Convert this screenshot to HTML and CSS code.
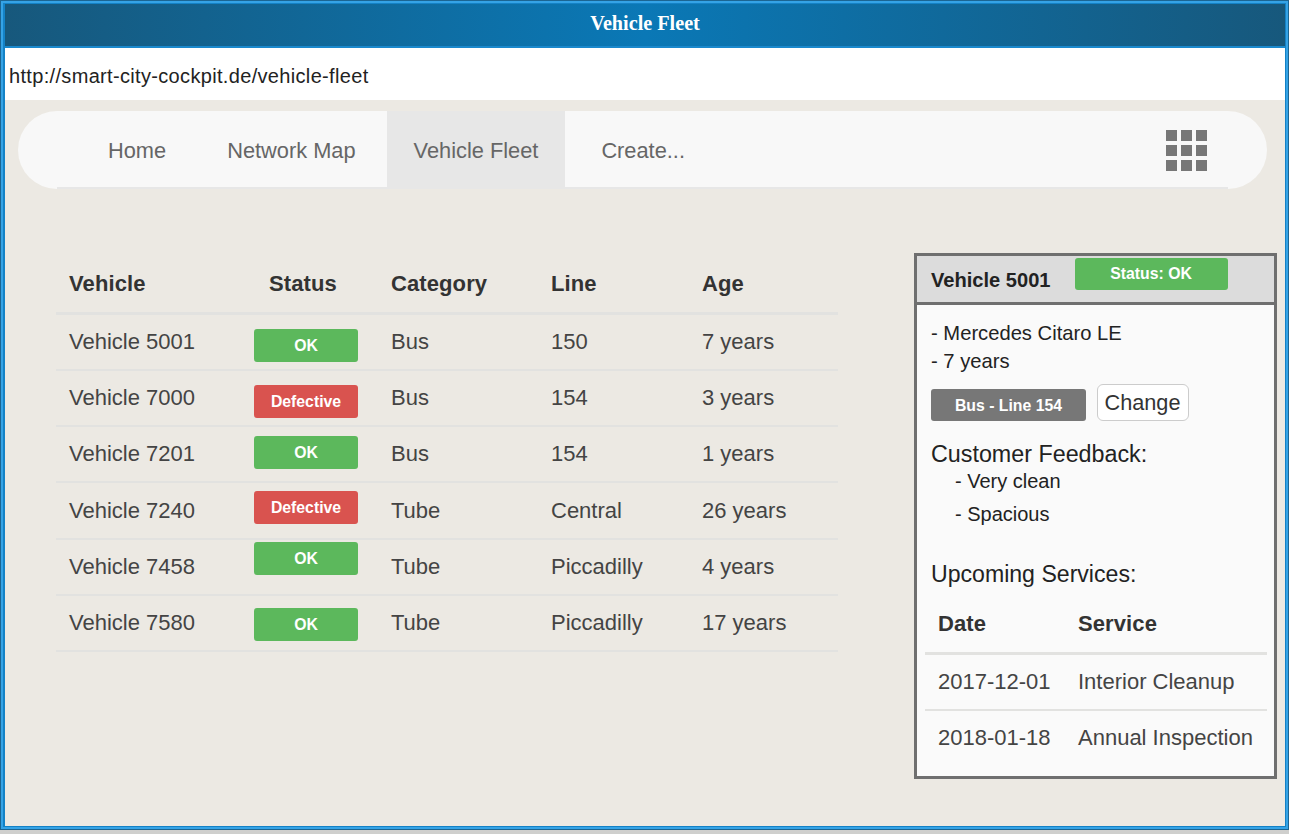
FILE: index.html
```html
<!DOCTYPE html>
<html lang="en">
<head>
  <meta charset="UTF-8">
  <meta name="viewport" content="width=device-width, initial-scale=1.0">
  <title>Vehicle Fleet</title>
  <link rel="stylesheet" href="styles.css">
</head>
<body>
  <div class="window">
    <div class="title-bar">Vehicle Fleet</div>
    <div class="url-bar">http://smart-city-cockpit.de/vehicle-fleet</div>
    <div class="content">
      <nav class="navbar">
        <div class="nav-inner">
          <a class="nav-home" href="#">Home</a>
          <a class="nav-map" href="#">Network Map</a>
          <a class="nav-fleet active" href="#">Vehicle Fleet</a>
          <a class="nav-create" href="#">Create...</a>
          <svg class="grid-icon" width="41" height="41" viewBox="0 0 41 41">
            <rect x="0" y="0" width="11" height="11"/>
            <rect x="15" y="0" width="11" height="11"/>
            <rect x="30" y="0" width="11" height="11"/>
            <rect x="0" y="15" width="11" height="11"/>
            <rect x="15" y="15" width="11" height="11"/>
            <rect x="30" y="15" width="11" height="11"/>
            <rect x="0" y="30" width="11" height="11"/>
            <rect x="15" y="30" width="11" height="11"/>
            <rect x="30" y="30" width="11" height="11"/>
          </svg>
        </div>
      </nav>

      <div class="main">
        <table class="fleet-table">
          <thead>
            <tr>
              <th class="col-vehicle">Vehicle</th>
              <th class="col-status">Status</th>
              <th class="col-category">Category</th>
              <th class="col-line">Line</th>
              <th>Age</th>
            </tr>
          </thead>
          <tbody>
            <tr>
              <td>Vehicle 5001</td>
              <td class="status-cell"><span class="badge ok drop-14">OK</span></td>
              <td>Bus</td><td>150</td><td>7 years</td>
            </tr>
            <tr>
              <td>Vehicle 7000</td>
              <td class="status-cell"><span class="badge defective drop-14">Defective</span></td>
              <td>Bus</td><td>154</td><td>3 years</td>
            </tr>
            <tr>
              <td>Vehicle 7201</td>
              <td class="status-cell"><span class="badge ok drop-9">OK</span></td>
              <td>Bus</td><td>154</td><td>1 years</td>
            </tr>
            <tr>
              <td>Vehicle 7240</td>
              <td class="status-cell"><span class="badge defective drop-8">Defective</span></td>
              <td>Tube</td><td>Central</td><td>26 years</td>
            </tr>
            <tr>
              <td>Vehicle 7458</td>
              <td class="status-cell"><span class="badge ok drop-2">OK</span></td>
              <td>Tube</td><td>Piccadilly</td><td>4 years</td>
            </tr>
            <tr>
              <td>Vehicle 7580</td>
              <td class="status-cell"><span class="badge ok drop-12">OK</span></td>
              <td>Tube</td><td>Piccadilly</td><td>17 years</td>
            </tr>
          </tbody>
        </table>

        <aside class="panel">
          <div class="panel-head">
            <span class="panel-title">Vehicle 5001</span>
            <span class="badge ok panel-status">Status: OK</span>
          </div>
          <div class="panel-body">
            <p class="spec">- Mercedes Citaro LE</p>
            <p class="spec">- 7 years</p>
            <div class="assign">
              <span class="badge line-badge">Bus - Line 154</span>
              <button class="change-btn">Change</button>
            </div>
            <h3 class="feedback-title">Customer Feedback:</h3>
            <p class="feedback">- Very clean</p>
            <p class="feedback">- Spacious</p>
            <h3 class="services-title">Upcoming Services:</h3>
            <table class="service-table">
              <thead>
                <tr><th class="col-date">Date</th><th>Service</th></tr>
              </thead>
              <tbody>
                <tr><td>2017-12-01</td><td>Interior Cleanup</td></tr>
                <tr><td>2018-01-18</td><td>Annual Inspection</td></tr>
              </tbody>
            </table>
          </div>
        </aside>
      </div>
    </div>
  </div>
</body>
</html>
```

FILE: styles.css
```css
html, body {
  margin: 0;
  height: 100%;
  overflow: hidden;
}
body {
  background-color: #cfcfcd;
  font-family: "Liberation Sans", Arial, sans-serif;
  color: #333;
}
.window {
  box-sizing: border-box;
  width: 1283px;
  height: 824px;
  margin: 3px;
  display: flex;
  flex-direction: column;
  border: 1px solid #1482c6;
  border-left-width: 2px;
  box-shadow: 0 0 0 2px #35a3e6, 0 0 0 3px #1c6592;
}
.title-bar {
  height: 44px;
  box-sizing: border-box;
  border-bottom: 2px solid #1a88cc;
  background: linear-gradient(to right, #17587c, #0a78b6 50%, #17587c);
  color: #fff;
  font-family: "Liberation Serif", "Times New Roman", serif;
  font-weight: bold;
  font-size: 20.2px;
  line-height: 39px;
  text-align: center;
}
.url-bar {
  height: 52px;
  background-color: #fff;
  color: #222;
  font-size: 20px;
  letter-spacing: 0.33px;
  line-height: 56px;
  padding-left: 4px;
}
.content {
  flex: 1;
  background-color: #ece9e3;
  padding-top: 11px;
}

/* nav */
.navbar {
  margin: 0 18px 0 13px;
  height: 78px;
  background-color: #f8f8f8;
  border-radius: 39px;
  padding: 0 39px;
}
.nav-inner {
  box-sizing: border-box;
  height: 78px;
  display: flex;
  align-items: stretch;
  border-bottom: 2px solid #e7e7e7;
}
.nav-inner a {
  color: #666;
  text-decoration: none;
  font-size: 21.8px;
  line-height: 80px;
  padding: 0 27px;
}
.nav-home { margin-left: 24px; }
.nav-map { margin-left: 7px; }
.nav-fleet { margin-left: 4px; }
.nav-create { margin-left: 9px; }
.nav-inner a.active {
  background-color: #e7e7e7;
  color: #666;
}
.grid-icon {
  margin: 19px 21px 0 auto;
  fill: #777;
}

/* main area */
.main {
  display: flex;
  align-items: flex-start;
  padding: 64px 8px 0 51px;
}
table {
  border-collapse: collapse;
  font-size: 22px;
}
th {
  text-align: left;
  padding: 0 0 0 13px;
  border-bottom: 3px solid #e2e2e0;
  color: #333;
  letter-spacing: 0.1px;
}
td {
  padding: 0 0 0 13px;
  border-bottom: 2px solid #e2e2e0;
  color: #444;
}
.fleet-table {
  width: 782px;
  margin-top: 3px;
  table-layout: fixed;
}
.fleet-table th { height: 56px; }
.fleet-table td { height: 54px; }
.fleet-table tbody tr:nth-child(4) td { height: 55px; }
.col-vehicle { width: 172px; }
.col-status { width: 109px; padding-left: 28px; }
.col-category { width: 147px; }
.col-line { width: 138px; }
.status-cell {
  vertical-align: top;
}
.badge {
  display: block;
  box-sizing: border-box;
  width: 104px;
  height: 33px;
  border-radius: 3px;
  color: #fff;
  font-size: 15.8px;
  font-weight: bold;
  line-height: 33px;
  text-align: center;
}
.ok { background-color: #5cb85c; }
.defective { background-color: #d9534f; }
.drop-2 { margin-top: 2px; }
.drop-8 { margin-top: 8px; }
.drop-9 { margin-top: 9px; }
.drop-12 { margin-top: 12px; }
.drop-14 { margin-top: 14px; }

/* detail panel */
.panel {
  box-sizing: border-box;
  width: 363px;
  height: 526px;
  margin-left: auto;
  border: 3px solid #6f6f6f;
  background-color: #fafafa;
  color: #222;
}
.panel-head {
  box-sizing: border-box;
  height: 49px;
  background-color: #dcdcdc;
  border-bottom: 3px solid #6f6f6f;
  display: flex;
  align-items: flex-start;
  padding: 2px 0 0 14px;
}
.panel-title {
  font-size: 20.1px;
  font-weight: bold;
  margin: 11px 24px 0 0;
}
.panel-status {
  width: 153px;
  height: 32px;
  line-height: 31px;
}
.panel-body {
  padding: 14px 7px 0 14px;
}
.spec {
  margin: 0;
  font-size: 20.2px;
  line-height: 28px;
}
.assign {
  display: flex;
  align-items: flex-end;
  gap: 11px;
  margin-top: 9px;
}
.line-badge {
  width: 155px;
  height: 32px;
  background-color: #777;
  line-height: 33px;
}
.change-btn {
  height: 37px;
  width: 92px;
  padding: 0 1px 0 0;
  background-color: #fff;
  border: 1px solid #ccc;
  border-radius: 6px;
  color: #333;
  font-family: inherit;
  font-size: 21.7px;
}
.feedback-title, .services-title {
  margin: 0;
  font-size: 23.3px;
  font-weight: normal;
  line-height: 30px;
}
.feedback-title { margin: 18px 0 -2px; }
.services-title { margin-top: 31px; font-size: 23.1px; }
.feedback {
  margin: 0 0 5px 24px;
  font-size: 20px;
  line-height: 28px;
}
.service-table {
  width: 342px;
  margin: 7px 0 0 -6px;
}
.service-table th { height: 56px; }
.service-table td { height: 54px; }
.service-table tbody tr:last-child td { border-bottom: 0; }
.col-date { width: 127px; }
```
